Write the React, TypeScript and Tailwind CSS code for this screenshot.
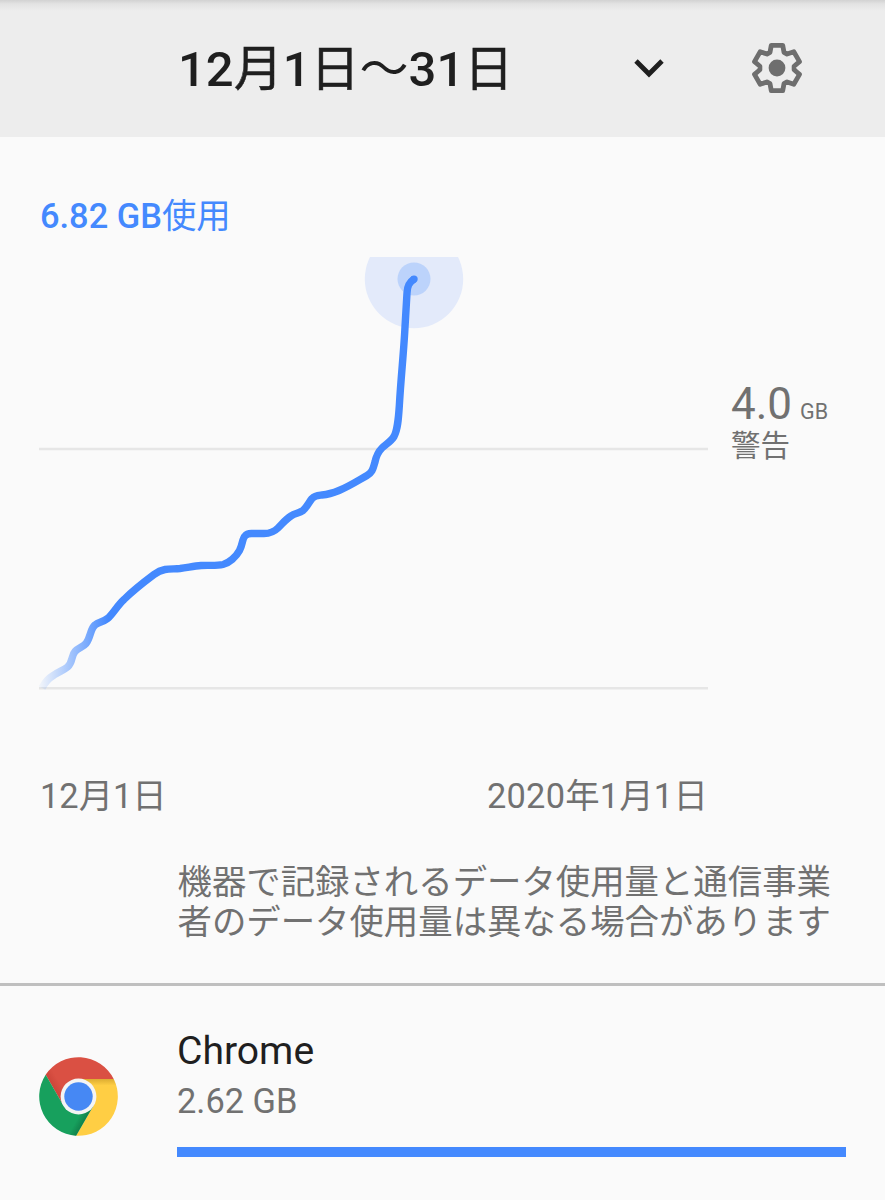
const GEAR_TOOTH = [
  [-7, -15.7],
  [-5.7, -22.7],
  [5.7, -22.7],
  [7, -15.7],
];

// the same tooth repeated every 60 degrees
const gearPoints = [0, 60, 120, 180, 240, 300]
  .flatMap((deg) => {
    const a = (deg * Math.PI) / 180;
    return GEAR_TOOTH.map(
      ([x, y]) =>
        `${(x * Math.cos(a) - y * Math.sin(a)).toFixed(2)},${(x * Math.sin(a) + y * Math.cos(a)).toFixed(2)}`,
    );
  })
  .join(' ');

function GearIcon() {
  return (
    <svg width="52" height="52" viewBox="-26 -26 52 52" fill="none">
      <polygon
        points={gearPoints}
        stroke="#6e6e6e"
        strokeWidth="4.8"
        strokeLinejoin="round"
      />
      <circle r="8.4" fill="#6e6e6e" />
    </svg>
  );
}

function ChevronIcon() {
  return (
    <svg width="30" height="20" viewBox="0 0 30 20" fill="none">
      <path d="M2 3L15 16L28 3" stroke="#1f1f1f" strokeWidth="4.8" />
    </svg>
  );
}

function ChromeIcon() {
  return (
    <svg width="80" height="80" viewBox="-39.5 -39.5 80 80">
      <defs>
        <linearGradient id="redShade" gradientUnits="userSpaceOnUse" x1="-24" y1="-6.5" x2="-17" y2="-10.5">
          <stop offset="0" stopColor="#b8362b" stopOpacity="0.4" />
          <stop offset="1" stopColor="#b8362b" stopOpacity="0" />
        </linearGradient>
        <linearGradient id="yellowShade" gradientUnits="userSpaceOnUse" x1="0" y1="-17.6" x2="0" y2="-11">
          <stop offset="0" stopColor="#b98a1e" stopOpacity="0.5" />
          <stop offset="1" stopColor="#b98a1e" stopOpacity="0" />
        </linearGradient>
        <linearGradient id="greenShade" gradientUnits="userSpaceOnUse" x1="6.4" y1="24" x2="0" y2="20.3">
          <stop offset="0" stopColor="#0b6339" stopOpacity="0.5" />
          <stop offset="1" stopColor="#0b6339" stopOpacity="0" />
        </linearGradient>
      </defs>
      <path d="M-32.8 -21.7A39.4 39.4 0 0 1 35.2 -17.6L0 -17.6L-15.2 8.8Z" fill="#da5043" />
      <path d="M-32.8 -21.7A39.4 39.4 0 0 1 35.2 -17.6L0 -17.6L-15.2 8.8Z" fill="url(#redShade)" />
      <path d="M35.2 -17.6A39.4 39.4 0 0 1 -2.4 39.3L15.2 8.8L0 -17.6Z" fill="#ffce44" />
      <path d="M35.2 -17.6A39.4 39.4 0 0 1 -2.4 39.3L15.2 8.8L0 -17.6Z" fill="url(#yellowShade)" />
      <path d="M-2.4 39.3A39.4 39.4 0 0 1 -32.8 -21.7L-15.2 8.8L15.2 8.8Z" fill="#17a05d" />
      <path d="M-2.4 39.3A39.4 39.4 0 0 1 -32.8 -21.7L-15.2 8.8L15.2 8.8Z" fill="url(#greenShade)" />
      <circle r="17.9" fill="#f4f4f4" />
      <circle r="14.2" fill="#4688f4" />
    </svg>
  );
}

function UsageChart() {
  return (
    <svg className="block shrink-0" width="669" height="433" viewBox="39 257 669 433" fill="none">
      <defs>
        <linearGradient id="fadeIn" gradientUnits="userSpaceOnUse" x1="40" y1="0" x2="108" y2="0">
          <stop offset="0" stopColor="#4489fe" stopOpacity="0.05" />
          <stop offset="1" stopColor="#4489fe" />
        </linearGradient>
      </defs>
      <path d="M39 449H708M39 688.2H708" stroke="#e6e6e6" strokeWidth="2.5" />
      <circle cx="414" cy="279" r="49.2" fill="#e3eafa" />
      <circle cx="414" cy="279" r="16.5" fill="#bcd3fb" />
      <path
        d="M42 688C45 682 49 678 54 675C60 671 64 670 67.5 667C73 662 71 656 75 651.5C78 648 83 647 86 643.5C91 637 90 629 95 625C98.5 622 103 622 107.5 618.5C112 615 117 606 124 599.5C133 590.5 144 582 154 574.5C158 571.5 161 570.2 165 569.5C170 568.8 175 569 180 568.5C188 567.5 194 566 201 565.5C209 565 216 566 223 564.5C229 563 236 557 239.5 550.5C243 544 242 539 245 536C247 533.5 249 533.6 252 533.5H264C270 533.5 274 532 278 528C283 523 286 519 291 516C295 513 299 513.5 303 510.5C307 507 309 502 312 498.5C315 495.5 318 495.5 322 495C328 494.5 333 493 339 490.5C349 486.5 359 480 367 475.5C373 472 373 468 375 462C376 457 378 452 382 448C386 444 391 441.5 394 436.5C398 429 398.5 418 399.5 403C401 377 404 349 405 327L407 293C407.3 286 409 282.5 414 279.2"
        stroke="url(#fadeIn)"
        strokeWidth="7.4"
        strokeLinejoin="round"
      />
      <circle cx="414" cy="279.1" r="3.7" fill="#4489fe" />
    </svg>
  );
}

export default function App() {
  return (
    <div className="h-[1200px] w-[885px] overflow-hidden bg-[#fafafa] font-['Roboto','Noto_Sans_CJK_JP',sans-serif] text-[34.4px] leading-[40px] text-[#717171]">
      <header className="flex h-[136.5px] items-center bg-[#ededed] bg-[linear-gradient(#d2d2d2,#e3e3e3_4px,#ededed_11px)] pl-[178px]">
        <h1 className="w-[456px] pt-1 text-[49px] leading-[56px] font-medium whitespace-nowrap text-[#1f1f1f]">
          12<span className="font-normal [-webkit-text-stroke:0.5px]">月</span>1
          <span className="font-normal [-webkit-text-stroke:0.5px]">日</span>
          <span className="font-normal">～</span>31
          <span className="font-normal [-webkit-text-stroke:0.5px]">日</span>
        </h1>
        <button>
          <ChevronIcon />
        </button>
        <button className="ml-[87px]">
          <GearIcon />
        </button>
      </header>

      <section className="pl-[39px]">
        <p className="mt-[59.5px] pl-px font-medium text-[#4489fe]">
          6.82 GB<span className="font-normal">使用</span>
        </p>
        <div className="mt-[21px] flex">
          <UsageChart />
          <div className="ml-[23px] pt-[123px] whitespace-nowrap">
            <p className="flex items-baseline gap-2 text-[44px] leading-[49px]">
              <span>4.0</span>
              <span className="text-[21.5px] leading-[24px]">GB</span>
            </p>
            <p className="text-[29.5px] leading-[34px]">警告</p>
          </div>
        </div>
        <div className="mt-[86px] flex w-[669px] justify-between">
          <span className="pl-px">12月1日</span>
          <span className="tracking-[0.2px]">2020年1月1日</span>
        </div>
      </section>

      <p className="mt-[45.5px] pl-[177.5px] leading-[40.3px] whitespace-nowrap">
        機器で記録されるデータ使用量と通信事業
        <br />
        者のデータ使用量は異なる場合があります
      </p>

      <div className="mt-[41px] h-[2.5px] bg-[#bfbfbf]" />

      <section className="flex pl-[39px]">
        <div className="mt-[71px] w-[138px]">
          <ChromeIcon />
        </div>
        <div className="w-[669px] pt-[41px]">
          <p className="text-[39.1px] leading-[48px] text-[#1f1f1f]">Chrome</p>
          <p className="mt-[6px]">2.62 GB</p>
          <div className="mt-[26px] h-[10px] bg-[#4489fe]" />
        </div>
      </section>
    </div>
  );
}
